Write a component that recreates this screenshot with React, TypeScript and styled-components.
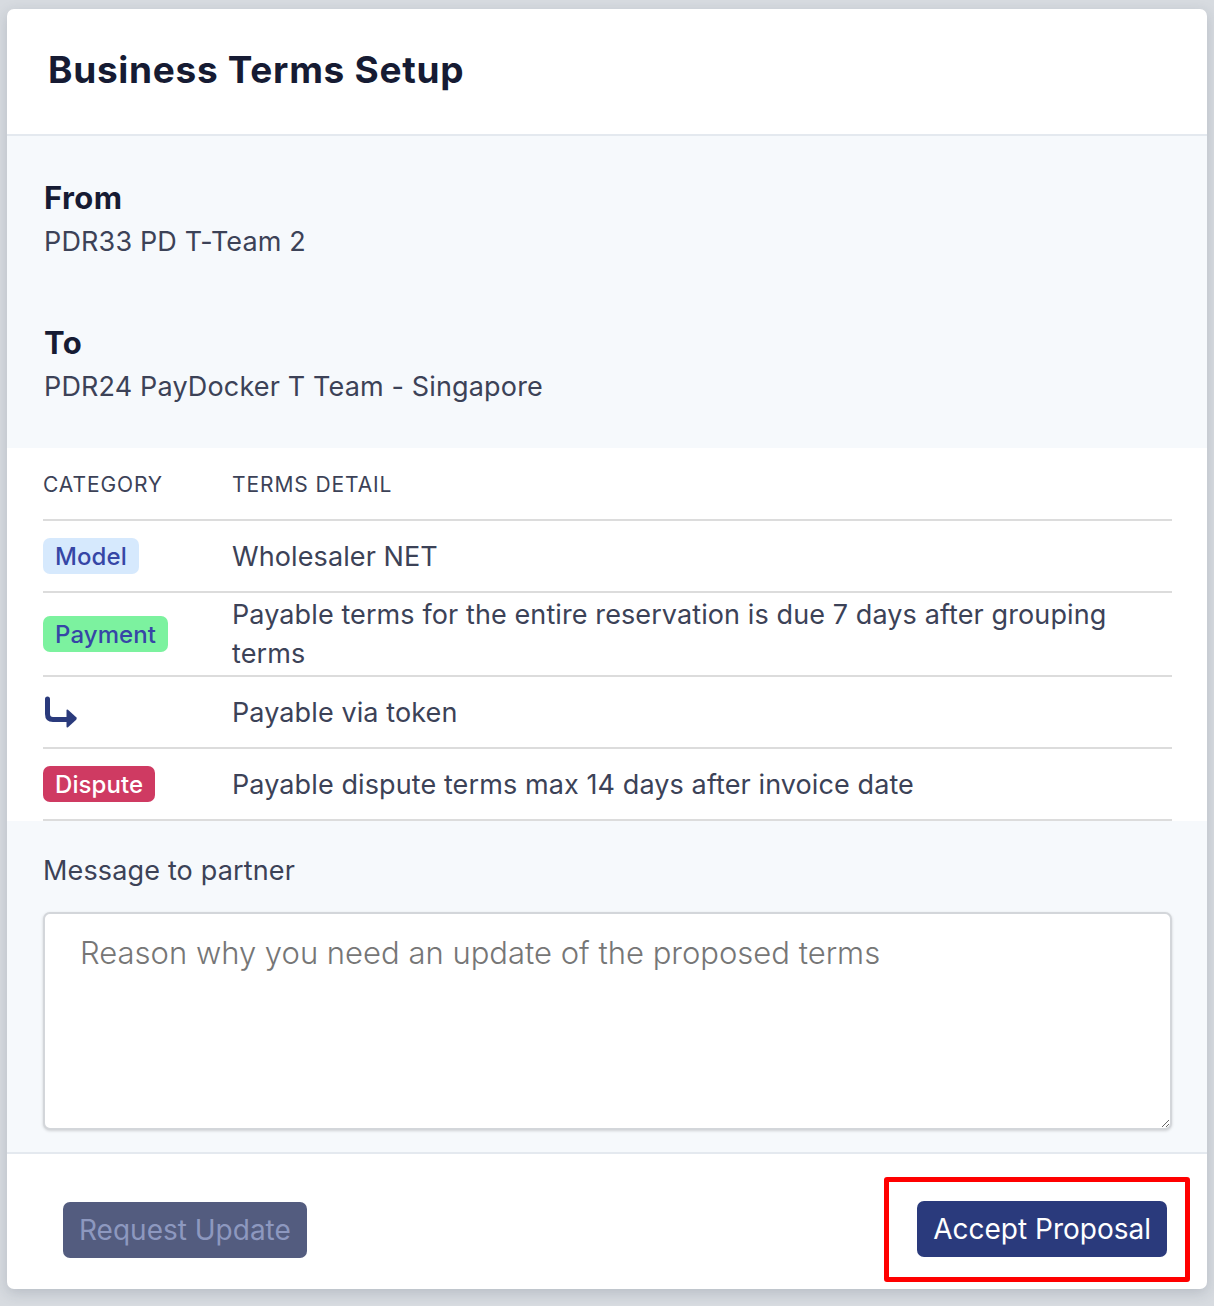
import styled, { createGlobalStyle } from "styled-components";

const GlobalStyle = createGlobalStyle`
  html, body {
    margin: 0;
    padding: 0;
    background: #d7dbe0;
    font-family: Inter, "Noto Sans", sans-serif;
  }
  * { box-sizing: border-box; }
`;

type Tone = "model" | "payment" | "dispute";

const terms: { tone?: Tone; label?: string; detail: string }[] = [
  { tone: "model", label: "Model", detail: "Wholesaler NET" },
  {
    tone: "payment",
    label: "Payment",
    detail:
      "Payable terms for the entire reservation is due 7 days after grouping terms",
  },
  { detail: "Payable via token" },
  {
    tone: "dispute",
    label: "Dispute",
    detail: "Payable dispute terms max 14 days after invoice date",
  },
];

function SubArrow() {
  return (
    <svg width="36" height="32" viewBox="0 0 36 32" fill="none">
      <path
        d="M4.5 3 V18 Q4.5 23.5 10 23.5 H25"
        stroke="#2a3a7c"
        strokeWidth="5"
        strokeLinecap="round"
        strokeLinejoin="round"
        fill="none"
      />
      <path
        d="M23.5 15.5 Q23.5 14 25 14.8 L33.2 22.3 Q34.3 23.5 33.2 24.7 L25 32.2 Q23.5 33 23.5 31.5 Z"
        fill="#2a3a7c"
        transform="translate(0 -1)"
      />
    </svg>
  );
}

function App() {
  return (
    <>
      <GlobalStyle />
      <Page>
        <Modal>
          <Header>
            <Title>Business Terms Setup</Title>
          </Header>

          <Parties>
            <Party>
              <PartyLabel>From</PartyLabel>
              <PartyValue>PDR33 PD T-Team 2</PartyValue>
            </Party>
            <Party>
              <PartyLabel>To</PartyLabel>
              <PartyValue>PDR24 PayDocker T Team - Singapore</PartyValue>
            </Party>
          </Parties>

          <TermsSection>
            <TermsTable>
              <HeadCell>Category</HeadCell>
              <HeadCell>Terms Detail</HeadCell>
              {terms.map((t, i) => (
                <Row key={i}>
                  <Cell>
                    {t.tone ? <Badge $tone={t.tone}>{t.label}</Badge> : <SubArrow />}
                  </Cell>
                  <Cell>{t.detail}</Cell>
                </Row>
              ))}
            </TermsTable>
          </TermsSection>

          <MessageSection>
            <FieldLabel>Message to partner</FieldLabel>
            <MessageInput placeholder="Reason why you need an update of the proposed terms" />
          </MessageSection>

          <Footer>
            <Button $variant="muted">Request Update</Button>
            <Highlight>
              <Button $variant="primary">Accept Proposal</Button>
            </Highlight>
          </Footer>
        </Modal>
      </Page>
    </>
  );
}

export default App;

/*Styled Components*/

const Page = styled.div`
  padding: 9px 7px 16px 7px;
`;

const Modal = styled.div`
  background: white;
  border-radius: 7px;
  overflow: hidden;
  box-shadow: 0 4px 14px rgba(40, 50, 70, 0.18);
`;

const Header = styled.div`
  height: 127px;
  display: flex;
  align-items: center;
  padding: 0 41px;
  border-bottom: 2px solid #e4e9ef;
`;

const Title = styled.h1`
  margin: 0;
  font-size: 37px;
  font-weight: 700;
  color: #161b33;
  letter-spacing: 0.7px;
  padding-bottom: 4px;
`;

const Parties = styled.div`
  background: #f6f9fc;
  padding: 41px 37px 41px 37px;
  display: flex;
  flex-direction: column;
  gap: 60px;
`;

const Party = styled.div`
  display: flex;
  flex-direction: column;
  gap: 3px;
`;

const PartyLabel = styled.div`
  font-size: 31px;
  line-height: 42px;
  font-weight: 700;
  letter-spacing: 0.4px;
  color: #161b33;
`;

const PartyValue = styled.div`
  font-size: 27px;
  line-height: 40px;
  letter-spacing: 0.15px;
  color: #3c4257;
`;

const TermsSection = styled.div`
  background: white;
  padding: 0 35px 0 36px;
`;

const TermsTable = styled.div`
  display: grid;
  grid-template-columns: 189px 1fr;
`;

const HeadCell = styled.div`
  height: 73px;
  display: flex;
  align-items: center;
  font-size: 21px;
  letter-spacing: 0.9px;
  text-transform: uppercase;
  color: #3c4257;
  border-bottom: 2px solid #dcdcdc;
  padding-top: 2px;
`;

const Row = styled.div`
  display: contents;
`;

const Cell = styled.div`
  min-height: 72px;
  display: flex;
  align-items: center;
  padding: 2px 40px 2px 0;
  font-size: 27px;
  line-height: 39px;
  letter-spacing: 0.1px;
  color: #3c4257;
  border-bottom: 2px solid #dcdcdc;
`;

const badgeColors: Record<Tone, { bg: string; fg: string }> = {
  model: { bg: "#d6e9fd", fg: "#3646a6" },
  payment: { bg: "#7cf29f", fg: "#3646a6" },
  dispute: { bg: "#cf3a62", fg: "#ffffff" },
};

const Badge = styled.span<{ $tone: Tone }>`
  display: inline-flex;
  align-items: center;
  height: 36px;
  padding: 0 12px;
  border-radius: 7px;
  font-size: 24px;
  font-weight: 500;
  background: ${(p) => badgeColors[p.$tone].bg};
  color: ${(p) => badgeColors[p.$tone].fg};
`;

const MessageSection = styled.div`
  background: #f6f9fc;
  padding: 30px 35px 22px 36px;
  border-bottom: 2px solid #e4e9ef;
  display: flex;
  flex-direction: column;
  gap: 21px;
`;

const FieldLabel = styled.div`
  font-size: 27px;
  line-height: 40px;
  letter-spacing: 0.15px;
  color: #3c4257;
`;

const MessageInput = styled.textarea`
  display: block;
  width: 100%;
  height: 218px;
  resize: vertical;
  border: 2px solid #d3d6da;
  border-radius: 7px;
  background: white;
  box-shadow: 0 1px 3px rgba(0, 0, 0, 0.16);
  padding: 18px 35px;
  font-family: Inter, "Noto Sans", sans-serif;
  font-size: 31px;
  line-height: 42px;
  color: #3c4257;
  outline: none;

  &::placeholder {
    color: #767676;
    font-weight: 300;
  }
`;

const Footer = styled.div`
  display: flex;
  align-items: center;
  justify-content: space-between;
  padding: 23px 17px 7px 56px;
`;

const Highlight = styled.div`
  border: 5px solid #ff0000;
  border-radius: 3px;
  padding: 19px 18px 20px 28px;
`;

const Button = styled.button<{ $variant: "muted" | "primary" }>`
  height: 56px;
  padding: 0 16px;
  border: none;
  border-radius: 7px;
  font-family: Inter, "Noto Sans", sans-serif;
  font-size: 28px;
  cursor: pointer;
  background: ${(p) => (p.$variant === "primary" ? "#2a3a7c" : "#535c7f")};
  color: ${(p) => (p.$variant === "primary" ? "#ffffff" : "#8d98bf")};
`;
